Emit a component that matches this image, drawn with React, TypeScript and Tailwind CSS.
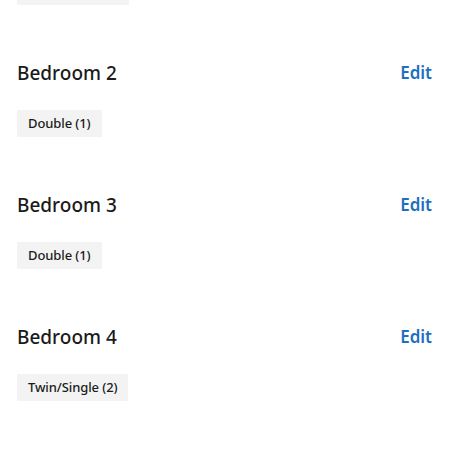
import React from 'react';

interface Room {
    name: string;
    beds: string;
}

const rooms: Room[] = [
    { name: 'Bedroom 2', beds: 'Double (1)' },
    { name: 'Bedroom 3', beds: 'Double (1)' },
    { name: 'Bedroom 4', beds: 'Twin/Single (2)' },
];

const RoomSection: React.FC<{ room: Room }> = ({ room }) => (
    <section className="pt-[54px]">
        <div className="flex items-center justify-between h-[28px]">
            <h3 className="text-[19px] leading-[28px] font-medium text-[#1b1b1b]">{room.name}</h3>
            <button className="text-[17px] leading-[28px] font-semibold text-[#1f6fc0]">Edit</button>
        </div>
        <div className="mt-[23px] flex">
            <span className="h-[27px] px-[11px] flex items-center bg-[#f3f3f3] text-[13px] font-medium tracking-[-0.1px] text-[#1b1b1b]">
                {room.beds}
            </span>
        </div>
    </section>
);

export default function App() {
    return (
        <div className="w-[450px] h-[450px] overflow-hidden bg-white" style={{ fontFamily: '"Noto Sans", "Open Sans", sans-serif' }}>
            <div className="pl-[17px] pr-[18px]">
                {/* bottom edge of the previous room's bed tag, scrolled off the top */}
                <div className="h-[5px] w-[112px] bg-[#f3f3f3]" />
                {rooms.map(room => (
                    <RoomSection key={room.name} room={room} />
                ))}
            </div>
        </div>
    );
}
